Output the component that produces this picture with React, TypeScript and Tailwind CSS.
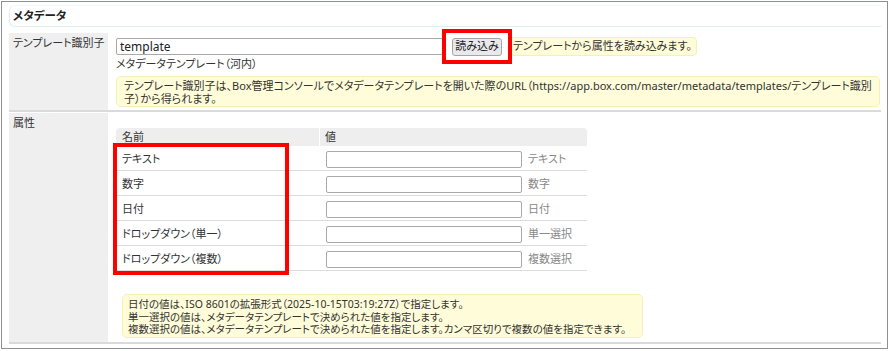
import React from "react";

const font = "font-['Noto_Sans','Noto_Sans_CJK_JP',sans-serif] [font-feature-settings:'palt']";

const rows = [
  { name: "テキスト", hint: "テキスト" },
  { name: "数字", hint: "数字" },
  { name: "日付", hint: "日付" },
  { name: "ドロップダウン（単一）", hint: "単一選択" },
  { name: "ドロップダウン（複数）", hint: "複数選択" },
];

export default function App() {
  return (
    <div className={`w-[890px] h-[351px] bg-white relative text-[11px] text-[#333] ${font}`}>
      <div className="ml-px mt-px w-[887px] h-[348px] border border-[#8f8f8f] pl-[7px] pr-[6px] pt-[3px]">
        {/* header */}
        <div className="h-[22px] rounded-l-[6px] border-l border-b border-t border-[#dff0ef] border-t-[#f3f9f9] pl-[3px] flex items-center">
          <span className="font-bold text-[11.5px] text-[#222]">メタデータ</span>
        </div>

        {/* row 1 */}
        <div className="mt-[6px] flex h-[77px]">
          <div className="w-[99px] bg-[#efefef] pl-1 pt-[3px] leading-[14px]">テンプレート識別子</div>
          <div className="ml-px flex-1 pl-[7px] pt-[4px]">
            <div className="flex items-center h-[19px]">
              <div className="w-[327px] h-[17px] border border-[#a9a9a9] rounded-[2px] px-[3px] flex items-center text-[12px] text-[#222]">
                template
              </div>
              <div className="ml-[9px] w-[50px] h-[18px] border border-[#a5a5a5] rounded-[3px] bg-[#e9e9ed] flex items-center justify-center text-[#222]">
                読み込み
              </div>
              <div className="ml-[6px] h-[19px] px-[4px] bg-[#fffcd9] border border-[#f6f0b8] rounded-[4px] flex items-center">
                テンプレートから属性を読み込みます。
              </div>
            </div>
            <div className="h-[15px] mt-[1px] flex items-center">メタデータテンプレート（河内）</div>
            <div className="mt-[4px] w-[764px] h-[31px] bg-[#fffcd9] border border-[#f6f0b8] rounded-[5px] px-[7px] pt-[2px] leading-[13px]">
              テンプレート識別子は、Box管理コンソールでメタデータテンプレートを開いた際のURL（https://app.box.com/master/metadata/templates/テンプレート識別子）から得られます。
            </div>
          </div>
        </div>

        <div className="h-[3px] border-t-2 border-[#dadada]" />

        {/* row 2 */}
        <div className="flex h-[231px] border-b-2 border-[#dadada]">
          <div className="w-[99px] bg-[#efefef] pl-1 pt-[3px] leading-[14px]">属性</div>
          <div className="ml-px flex-1 pl-[7px] pt-[15px]">
            <div className="w-[471px]">
              <div className="flex h-[18px] bg-[#eeeeee] rounded-t-[4px]">
                <div className="w-[204px] pl-[6px] flex items-center border-r border-white">名前</div>
                <div className="flex-1 pl-[5px] flex items-center">値</div>
              </div>
              {rows.map((r) => (
                <div key={r.name} className="flex h-[25px] border-b border-[#dcdcdc] items-center pt-[2px]">
                  <div className="w-[204px] pl-[6px]">{r.name}</div>
                  <div className="flex-1 pl-[6px] flex items-center">
                    <div className="w-[196px] h-[17px] border border-[#a9a9a9] rounded-[2px]" />
                    <span className="ml-[6px] text-[#888]">{r.hint}</span>
                  </div>
                </div>
              ))}
            </div>
            <div className="mt-[23px] ml-[6px] w-[521px] h-[44px] bg-[#fffcd9] border border-[#f6f0b8] rounded-[5px] px-[5px] pt-[3px] leading-[12.5px] text-[10.5px] whitespace-nowrap">
              <div>日付の値は、ISO 8601の拡張形式（2025-10-15T03:19:27Z）で指定します。</div>
              <div>単一選択の値は、メタデータテンプレートで決められた値を指定します。</div>
              <div>複数選択の値は、メタデータテンプレートで決められた値を指定します。カンマ区切りで複数の値を指定できます。</div>
            </div>
          </div>
        </div>
      </div>

      {/* annotations */}
      <div className="absolute left-[442px] top-[28px] w-[70px] h-[35px] border-4 border-[#ff0000]" />
      <div className="absolute left-[113px] top-[142px] w-[176px] h-[132px] border-4 border-[#ff0000]" />
    </div>
  );
}
